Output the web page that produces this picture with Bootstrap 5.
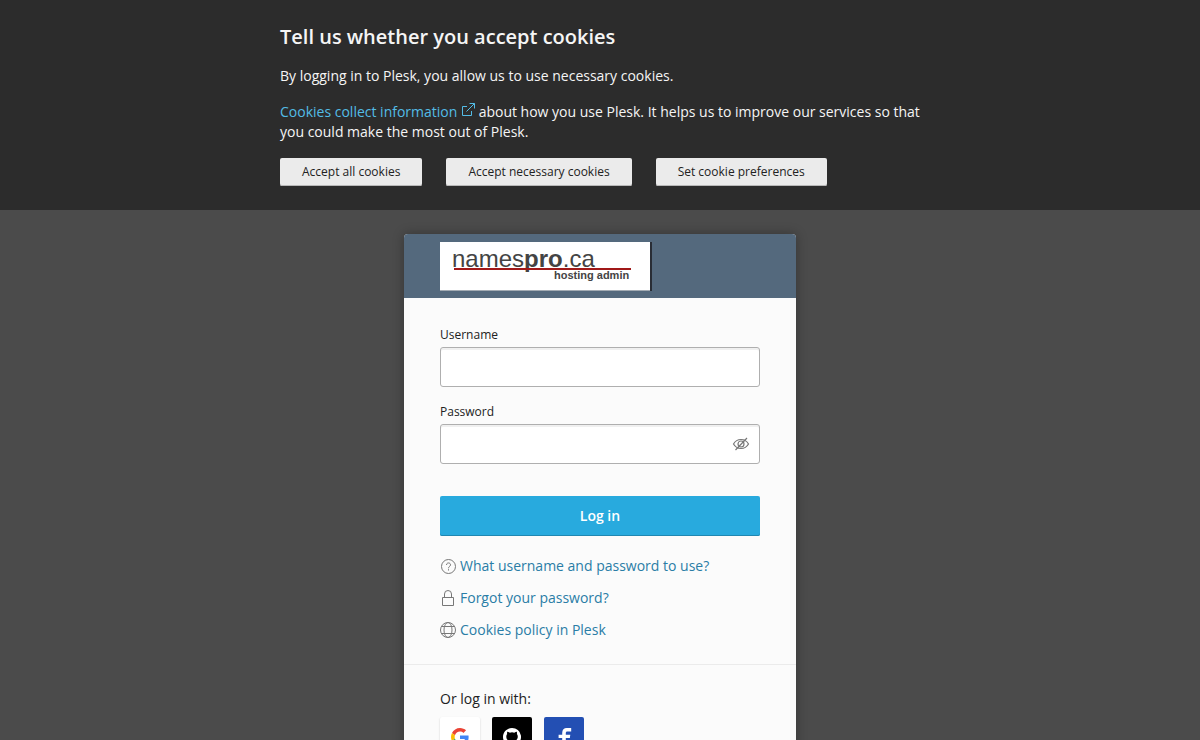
<!DOCTYPE html>
<html lang="en">
<head>
<meta charset="utf-8">
<meta name="viewport" content="width=device-width, initial-scale=1">
<title>Plesk login</title>
<link href="https://cdn.jsdelivr.net/npm/bootstrap@5.3.0/dist/css/bootstrap.min.css" rel="stylesheet">
<style>
html { scrollbar-width: none; }
body { background: #4b4b4b; color: #222; font: 14px/20px "Open Sans", sans-serif; }
.cookie-bar { background: #2c2c2c; color: #f5f5f5; padding: 24px 16px; }
.cookie-inner { max-width: 640px; }
.cookie-bar h1 { font-size: 20px; line-height: 26px; font-weight: 600; margin-bottom: 16px; }
.cookie-bar p { margin-bottom: 16px; }
.cookie-bar a { color: #53bce6; text-decoration: none; }
.btn-cookie { --bs-btn-bg: #ebebeb; --bs-btn-color: #222; --bs-btn-hover-bg: #fff; --bs-btn-hover-color: #222; --bs-btn-border-width: 0; --bs-btn-border-radius: 2px; --bs-btn-padding-x: 22px; --bs-btn-padding-y: 4px; --bs-btn-font-size: 12px; --bs-btn-line-height: 20px; box-shadow: inset 0 -1px #b8b8b8; }
.login-card { max-width: 392px; background: #fbfbfb; border-radius: 4px; box-shadow: 0 0 12px rgba(0,0,0,.3); overflow: hidden; }
.login-head { background: #54697d; padding: 8px 36px; }
.login-body { padding: 28px 36px 24px; }
.login-body .form-label { font-size: 12px; line-height: 18px; margin-bottom: 3px; display: block; }
.login-body .form-control { height: 40px; border: 1px solid #afafaf; border-radius: 3px; background: #fff; box-shadow: inset 0 2px #f0f0f0; }
.eye-btn { right: 10px; top: 11px; color: #777; }
.btn-login { --bs-btn-bg: #28aade; --bs-btn-color: #fff; --bs-btn-hover-bg: #1f9bcd; --bs-btn-hover-color: #fff; --bs-btn-border-width: 0; --bs-btn-border-radius: 2px; --bs-btn-font-size: 14px; --bs-btn-line-height: 20px; --bs-btn-padding-y: 10px; font-weight: 600; margin: 32px 0 20px; box-shadow: inset 0 -1px #2087b1; }
.help-links { gap: 12px; }
.help-links a { color: #2a7da6; text-decoration: none; }
.help-links svg { color: #777; flex: none; }
.social { padding: 24px 36px 32px; border-top: 1px solid #ebebeb; }
.social-row { gap: 12px; }
.social-btn { width: 40px; height: 40px; border-radius: 2px; }
.google { background: #fff; box-shadow: 0 1px 2px rgba(0,0,0,.2); }
.github { background: #000; }
.facebook { background: #234fb3; }
</style>
</head>
<body>
<section class="cookie-bar" aria-label="Cookies">
  <div class="cookie-inner mx-auto">
    <h1>Tell us whether you accept cookies</h1>
    <p>By logging in to Plesk, you allow us to use necessary cookies.</p>
    <p><a href="#">Cookies collect information <svg class="align-baseline" width="14" height="14" viewBox="0 0 14 14" fill="none" stroke="currentColor"><path d="M6 3.500H1.500v9h9V8M8.500.5h5v5M13.500.5l-8 8"/></svg></a> about how you use Plesk. It helps us to improve our services so that you could make the most out of Plesk.</p>
    <div class="d-flex flex-wrap gap-4">
      <button type="button" class="btn btn-cookie">Accept all cookies</button>
      <button type="button" class="btn btn-cookie">Accept necessary cookies</button>
      <button type="button" class="btn btn-cookie">Set cookie preferences</button>
    </div>
  </div>
</section>
<main class="login-card mx-auto my-4">
  <header class="login-head">
    <svg class="d-block" width="212" height="48" viewBox="0 0 212 48" overflow="visible" role="img" aria-label="namespro.ca hosting admin">
      <path fill="#fff" d="M0 0h210v48H0z"/><path fill="#292d35" d="M210 0h2v49h-2z"/><path fill="#a3abb3" d="M0 48h210v1H0z"/>
      <g fill="#444" font-family="Liberation Sans, sans-serif"><text x="12" y="25" font-size="24">names<tspan font-weight="700">pro</tspan>.ca</text>
      <path fill="#a01818" d="M14 26h177v2H14z"/>
      <text x="114" y="37" font-size="11" font-weight="700">hosting admin</text></g>
    </svg>
  </header>
  <form class="login-body">
    <div class="mb-3">
      <label class="form-label" for="user">Username</label>
      <input class="form-control" type="text" id="user">
    </div>
    <div>
      <label class="form-label" for="pass">Password</label>
      <div class="position-relative">
        <input class="form-control pe-5" type="password" id="pass">
        <button type="button" class="eye-btn btn p-0 border-0 d-flex position-absolute" aria-label="Show password">
          <svg width="18" height="18" viewBox="0 0 18 18" fill="none" stroke="currentColor" stroke-width="1.200"><path d="M1.500 9C3.500 5.500 6 4.500 9 4.500s5.500 1 7.500 4.500c-2 3.500-4.500 4.500-7.500 4.500S3.500 12.500 1.500 9zM3.500 15 15 3"/><circle cx="9" cy="9" r="3"/></svg>
        </button>
      </div>
    </div>
    <button type="submit" class="btn btn-login w-100 d-block">Log in</button>
    <div class="help-links d-flex flex-column">
      <div class="d-flex gap-1 align-items-center"><svg width="16" height="16" viewBox="0 0 16 16" fill="none" stroke="currentColor"><circle cx="8.500" cy="8.500" r="7"/><path d="M6.500 7c0-3 4.300-2.500 4 0-.2 1.500-2 1.500-2 3.300M8.500 11.200v1.300"/></svg><a href="#">What username and password to use?</a></div>
      <div class="d-flex gap-1 align-items-center"><svg width="16" height="16" viewBox="0 0 16 16" fill="none" stroke="currentColor"><path d="M2.500 7.500h11v8h-11zM4.500 7.500v-3.500a3.500 3.500 0 0 1 7 0v3.500"/></svg><a href="#">Forgot your password?</a></div>
      <div class="d-flex gap-1 align-items-center"><svg width="16" height="16" viewBox="0 0 16 16" fill="none" stroke="currentColor"><circle cx="8" cy="8" r="7.500"/><ellipse cx="8" cy="8" rx="4" ry="7.500"/><path d="M2 4.500h12M2 11.500h12"/></svg><a href="#">Cookies policy in Plesk</a></div>
    </div>
  </form>
  <section class="social">
    <div class="mb-2">Or log in with:</div>
    <div class="social-row d-flex">
      <button type="button" class="social-btn google btn p-0 border-0 d-flex align-items-center justify-content-center" aria-label="Google"><svg width="18" height="18" viewBox="0 0 48 48"><path fill="#EA4335" d="M24 9.500c3.540 0 6.710 1.220 9.210 3.600l6.850-6.850C35.900 2.380 30.470 0 24 0 14.620 0 6.510 5.380 2.560 13.220l7.980 6.190C12.430 13.720 17.740 9.500 24 9.500z"/><path fill="#4285F4" d="M46.980 24.550c0-1.570-.15-3.090-.38-4.550H24v9.020h12.940c-.58 2.960-2.260 5.480-4.780 7.180l7.730 6c4.510-4.180 7.090-10.360 7.090-17.650z"/><path fill="#FBBC05" d="M10.530 28.590c-.48-1.450-.76-2.990-.76-4.590s.27-3.140.76-4.590l-7.980-6.190C.92 16.460 0 20.120 0 24s.92 7.540 2.560 10.780z"/><path fill="#34A853" d="M24 48c6.480 0 11.930-2.130 15.890-5.810l-7.730-6c-2.150 1.450-4.920 2.300-8.160 2.300-6.260 0-11.570-4.220-13.470-9.910l-7.980 6.190C6.510 42.620 14.620 48 24 48z"/></svg></button>
      <button type="button" class="social-btn github btn p-0 border-0 d-flex align-items-center justify-content-center" aria-label="GitHub"><svg width="18" height="18" viewBox="0 0 16 16" fill="#fff"><path d="M8 0C3.580 0 0 3.580 0 8c0 3.540 2.290 6.530 5.470 7.590.4.070.55-.17.55-.38v-1.490c-2.010.44-2.530-.49-2.690-.94-.09-.23-.48-.94-.82-1.130-.28-.15-.68-.52-.01-.53.63-.01 1.080.58 1.230.82.720 1.210 1.870.87 2.330.66.070-.52.280-.87.510-1.070-1.780-.2-3.640-.89-3.640-3.950 0-.87.310-1.590.82-2.150-.08-.2-.36-1.020.08-2.120 0 0 .67-.21 2.200.82a7.600 7.600 0 0 1 4 0c1.530-1.040 2.200-.82 2.200-.82.44 1.100.16 1.920.08 2.120.51.56.82 1.270.82 2.150 0 3.070-1.870 3.750-3.650 3.950.29.250.54.730.54 1.480v2.200c0 .21.150.46.550.38A8 8 0 0 0 8 0z"/></svg></button>
      <button type="button" class="social-btn facebook btn p-0 border-0 d-flex align-items-center justify-content-center" aria-label="Facebook"><svg width="18" height="18" viewBox="0 0 20 20" fill="#fff"><path d="M8 20v-9H4V7.500h4V5.500C8 2 10 0 13 0h5v4h-4.200c-1.300 0-1.800.6-1.800 1.800v1.700h5L16.500 11H12v9z"/></svg></button>
    </div>
  </section>
</main>
<script src="https://cdn.jsdelivr.net/npm/bootstrap@5.3.0/dist/js/bootstrap.bundle.min.js"></script>
</body>
</html>
